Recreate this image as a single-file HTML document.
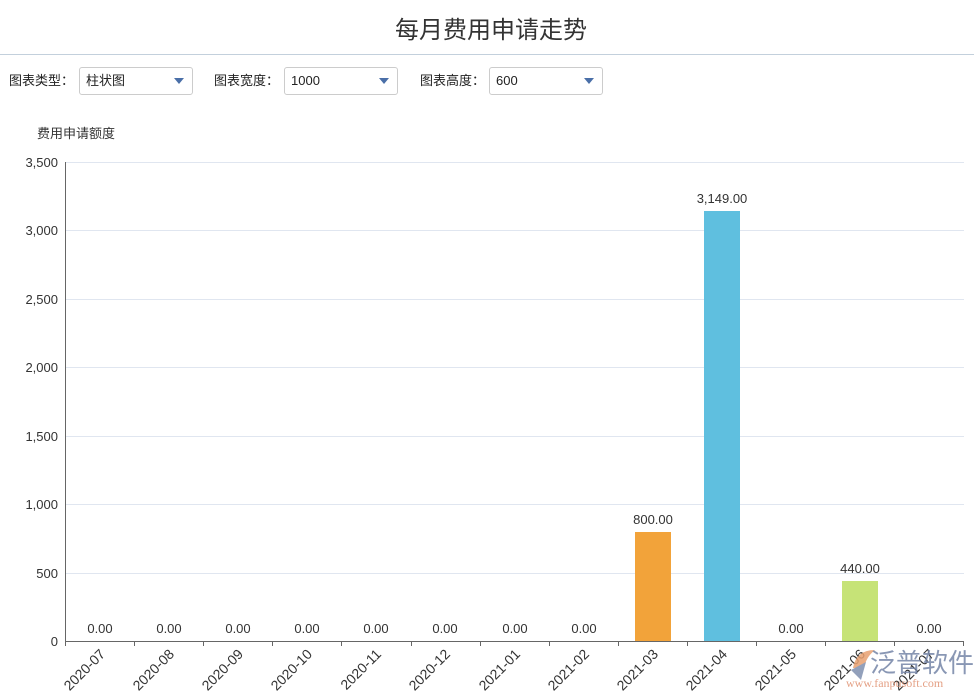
<!DOCTYPE html>
<html><head><meta charset="utf-8"><style>
body{margin:0;width:974px;height:695px;background:#fff;font-family:"Liberation Sans","Noto Sans CJK SC",sans-serif;position:relative;overflow:hidden}
.title{position:absolute;top:10px;left:0;width:974px;text-align:center;font-size:24px;color:#333;padding-left:8px;box-sizing:border-box}
.hr{position:absolute;top:54px;left:0;width:974px;height:1px;background:#c3d0dc}
.lbl{position:absolute;top:70px;font-size:13px;color:#222}
.sel{position:absolute;top:67px;width:114px;height:28px;box-sizing:border-box;border:1px solid #ccc;border-radius:3px;font-size:13px;color:#222;line-height:26px;padding-left:6px}
.sel:after{content:"";position:absolute;right:8px;top:10px;border-left:5px solid transparent;border-right:5px solid transparent;border-top:6px solid #4a6fa8}
</style></head><body>
<div class="title">每月费用申请走势</div>
<div class="hr"></div>
<div class="lbl" style="left:9px">图表类型：</div>
<div class="sel" style="left:79px">柱状图</div>
<div class="lbl" style="left:214px">图表宽度：</div>
<div class="sel" style="left:284px">1000</div>
<div class="lbl" style="left:420px">图表高度：</div>
<div class="sel" style="left:489px">600</div>
<svg width="974" height="695" style="position:absolute;left:0;top:0" font-family="Liberation Sans, Noto Sans CJK SC, sans-serif">
<text x="37" y="138" font-size="13" fill="#333">费用申请额度</text>
<g stroke="#e0e6f0" stroke-width="1">
<line x1="65" x2="964" y1="162.5" y2="162.5"/><line x1="65" x2="964" y1="230.5" y2="230.5"/><line x1="65" x2="964" y1="299.5" y2="299.5"/><line x1="65" x2="964" y1="367.5" y2="367.5"/><line x1="65" x2="964" y1="436.5" y2="436.5"/><line x1="65" x2="964" y1="504.5" y2="504.5"/><line x1="65" x2="964" y1="573.5" y2="573.5"/>
</g>
<line x1="65.5" x2="65.5" y1="162" y2="641" stroke="#666"/>
<line x1="65" x2="964" y1="641.5" y2="641.5" stroke="#666"/>
<g font-size="13" fill="#333" text-anchor="end">
<text x="58" y="167">3,500</text><text x="58" y="235">3,000</text><text x="58" y="304">2,500</text><text x="58" y="372">2,000</text><text x="58" y="441">1,500</text><text x="58" y="509">1,000</text><text x="58" y="578">500</text><text x="58" y="646">0</text>
</g>
<rect x="635" y="532" width="36" height="109" fill="#f2a33a"/>
<rect x="704" y="211" width="36" height="430" fill="#5fbfdf"/>
<rect x="842" y="581" width="36" height="60" fill="#c6e377"/>
<g font-size="13" fill="#333" text-anchor="middle">
<text x="100" y="633">0.00</text><text x="169" y="633">0.00</text><text x="238" y="633">0.00</text><text x="307" y="633">0.00</text><text x="376" y="633">0.00</text><text x="445" y="633">0.00</text><text x="515" y="633">0.00</text><text x="584" y="633">0.00</text>
<text x="653" y="524">800.00</text><text x="722" y="203">3,149.00</text><text x="791" y="633">0.00</text><text x="860" y="573">440.00</text><text x="929" y="633">0.00</text>
</g>
<g stroke="#666">
<line x1="65.5" x2="65.5" y1="641" y2="646"/><line x1="134.5" x2="134.5" y1="641" y2="646"/><line x1="203.5" x2="203.5" y1="641" y2="646"/><line x1="272.5" x2="272.5" y1="641" y2="646"/><line x1="341.5" x2="341.5" y1="641" y2="646"/><line x1="411.5" x2="411.5" y1="641" y2="646"/><line x1="480.5" x2="480.5" y1="641" y2="646"/><line x1="549.5" x2="549.5" y1="641" y2="646"/><line x1="618.5" x2="618.5" y1="641" y2="646"/><line x1="687.5" x2="687.5" y1="641" y2="646"/><line x1="756.5" x2="756.5" y1="641" y2="646"/><line x1="825.5" x2="825.5" y1="641" y2="646"/><line x1="894.5" x2="894.5" y1="641" y2="646"/><line x1="963.5" x2="963.5" y1="641" y2="646"/>
</g>
<g font-size="14" fill="#333" text-anchor="end">
<text transform="translate(106,655) rotate(-45)">2020-07</text>
<text transform="translate(175,655) rotate(-45)">2020-08</text>
<text transform="translate(244,655) rotate(-45)">2020-09</text>
<text transform="translate(313,655) rotate(-45)">2020-10</text>
<text transform="translate(382,655) rotate(-45)">2020-11</text>
<text transform="translate(451,655) rotate(-45)">2020-12</text>
<text transform="translate(521,655) rotate(-45)">2021-01</text>
<text transform="translate(590,655) rotate(-45)">2021-02</text>
<text transform="translate(659,655) rotate(-45)">2021-03</text>
<text transform="translate(728,655) rotate(-45)">2021-04</text>
<text transform="translate(797,655) rotate(-45)">2021-05</text>
<text transform="translate(866,655) rotate(-45)">2021-06</text>
<text transform="translate(935,655) rotate(-45)">2021-07</text>
</g>
<g opacity="0.85">
<path d="M853 668 Q856 650 875 650 Q866 657 864 668 Z" fill="#e8a070"/>
<path d="M851 670 L866 662 L861 680 Z" fill="#8090b0"/>
<text x="870" y="672" font-size="26" fill="#7585a8">泛普软件</text>
<text x="846" y="687" font-size="12" fill="#e09070" font-family="Liberation Serif, serif">www.fanpusoft.com</text>
</g>
</svg>
</body></html>
